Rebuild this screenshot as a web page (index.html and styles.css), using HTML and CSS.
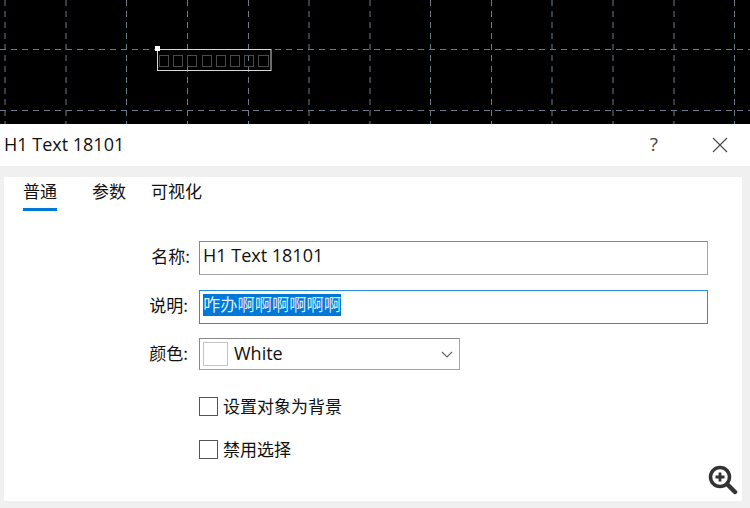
FILE: index.html
```html
<!DOCTYPE html>
<html>
	<head>
		<meta charset="utf-8">
		<title>H1 Text 18101</title>
		<link rel="stylesheet" href="styles.css">
	</head>
	<body>
		<div class="chart">
			<svg class="chart-svg" width="750" height="124" viewBox="0 0 750 124">
				<g class="grid-line">
					<path d="M5 0V124M66 0V124M126.5 0V124M187.5 0V124M248.5 0V124M309 0V124M370 0V124M430.5 0V124M491.5 0V124M552 0V124M613 0V124M674 0V124M734.5 0V124"/>
					<path d="M0 49.5H750M0 110.5H750"/>
				</g>
				<rect class="text-box" x="157.5" y="49.5" width="113.5" height="21"/>
				<g class="tofu">
					<rect x="159.5" y="55.5" width="9" height="11"/>
					<rect x="173.5" y="55.5" width="9" height="11"/>
					<rect x="187.5" y="55.5" width="9" height="11"/>
					<rect x="202.5" y="55.5" width="9" height="11"/>
					<rect x="216.5" y="55.5" width="9" height="11"/>
					<rect x="230.5" y="55.5" width="9" height="11"/>
					<rect x="244.5" y="55.5" width="9" height="11"/>
					<rect x="258.5" y="55.5" width="10" height="11"/>
				</g>
				<rect class="anchor" x="155" y="46" width="5" height="5"/>
			</svg>
		</div>

		<div class="dialog">
			<div class="title-bar">
				<span class="title-text">H1 Text 18101</span>
				<span class="title-help">?</span>
				<svg class="title-close" width="16" height="16" viewBox="0 0 16 16">
					<path d="M1 1L15 15M15 1L1 15"/>
				</svg>
			</div>

			<div class="panel">
				<div class="tabs">
					<div class="tab tab-active">普通</div>
					<div class="tab">参数</div>
					<div class="tab">可视化</div>
				</div>

				<div class="form">
					<div class="form-row">
						<label class="form-label form-label-name">名称:</label>
						<div class="field">H1 Text 18101</div>
					</div>
					<div class="form-row">
						<label class="form-label">说明:</label>
						<div class="field field-focus"><span class="selected">咋办啊啊啊啊啊啊</span></div>
					</div>
					<div class="form-row form-row-color">
						<label class="form-label">颜色:</label>
						<div class="color-select">
							<span class="color-swatch"></span>
							<span class="color-name">White</span>
							<svg class="color-arrow" width="12" height="7" viewBox="0 0 12 7">
								<path d="M1 1L6 6L11 1"/>
							</svg>
						</div>
					</div>
					<div class="check-row check-row-first">
						<span class="check-box"></span>
						<span class="check-text">设置对象为背景</span>
					</div>
					<div class="check-row">
						<span class="check-box"></span>
						<span class="check-text">禁用选择</span>
					</div>
				</div>

				<svg class="zoom-icon" width="30" height="30" viewBox="0 0 30 30">
					<circle class="zoom-ring" cx="12" cy="12" r="9.5"/>
					<path class="zoom-handle" d="M19.5 19.5L27 27"/>
					<path class="zoom-plus" d="M12 7.5V16.5M7.5 12H16.5"/>
				</svg>
			</div>
		</div>
	</body>
</html>
```

FILE: styles.css
```css
html, body {
	margin: 0;
	padding: 0;
}

body {
	width: 750px;
	height: 508px;
	overflow: hidden;
	background: #f0f0f0;
	font-family: "Open Sans", "Noto Sans CJK SC", sans-serif;
	color: #111;
}

.chart {
	height: 124px;
	background: #000;
}

.chart-svg {
	display: block;
}

.grid-line path {
	fill: none;
	stroke: #6b7b8c;
	stroke-width: 1;
	stroke-dasharray: 6 5;
}

.text-box {
	fill: none;
	stroke: #d8d8d8;
	stroke-width: 1;
}

.tofu rect {
	fill: none;
	stroke: #4a4a4a;
	stroke-width: 1;
}

.anchor {
	fill: #fff;
}

.dialog {
	height: 384px;
	display: flex;
	flex-direction: column;
}

.title-bar {
	height: 42px;
	flex: none;
	box-sizing: border-box;
	background: #fff;
	display: flex;
	align-items: center;
	padding: 0 22px 0 4px;
	font-size: 18px;
	line-height: 40px;
}

.title-text {
	flex: 1;
	height: 40px;
	margin-bottom: 2px;
}

.title-help {
	margin-right: 54px;
	color: #444;
	font-size: 19px;
	height: 40px;
	margin-bottom: 2px;
}

.title-close path {
	fill: none;
	stroke: #444;
	stroke-width: 1.1;
}

.panel {
	position: relative;
	flex: none;
	height: 324px;
	margin: 11px 8px 0 4px;
	background: #fff;
}

.tabs {
	display: flex;
	padding-left: 19px;
	height: 34px;
	font-size: 17px;
	font-family: "Noto Sans CJK SC", sans-serif;
}

.tab {
	margin-right: 35px;
	line-height: 28px;
	height: 34px;
	box-sizing: border-box;
}

.tab + .tab + .tab {
	margin-left: -10px;
}

.tab-active {
	border-bottom: 3px solid #0078d7;
}

.form {
	padding-top: 30px;
	font-family: "Noto Sans CJK SC", sans-serif;
	font-size: 17px;
}

.form-row {
	display: flex;
	align-items: center;
	height: 34px;
	margin-bottom: 15px;
}

.form-row-color {
	height: 32px;
	margin-top: -1px;
}

.form-label {
	width: 184px;
	text-align: right;
	margin-right: 11px;
	line-height: 28px;
	height: 32px;
}

.form-row-color .form-label {
	line-height: 30px;
}

.form-label-name {
	width: 186px;
	margin-right: 9px;
}

.field {
	width: 509px;
	height: 34px;
	box-sizing: border-box;
	border: 1px solid #888;
	border-right-color: #a4a4a4;
	border-bottom-color: #a4a4a4;
	padding-left: 3px;
	font-family: "Open Sans", "Noto Sans CJK SC", sans-serif;
	font-size: 18px;
	line-height: 26px;
}

.field-focus {
	border-color: #2e8ce0;
}

.selected {
	display: inline-block;
	height: 22px;
	line-height: 20px;
	margin-top: 3px;
	vertical-align: top;
	background: #0078d7;
	color: #dbeaf7;
	font-family: "Noto Sans CJK SC", sans-serif;
	font-size: 17.25px;
}

.color-select {
	width: 261px;
	height: 32px;
	box-sizing: border-box;
	border: 1px solid #888;
	border-right-color: #a4a4a4;
	border-bottom-color: #a4a4a4;
	display: flex;
	align-items: center;
	padding-left: 3px;
	font-family: "Open Sans", sans-serif;
	font-size: 18px;
	line-height: 28px;
}

.color-swatch {
	width: 23px;
	height: 22px;
	border: 1px solid #c4c4c4;
	background: #fff;
}

.color-name {
	flex: 1;
	margin-left: 6px;
	height: 28px;
	margin-bottom: 2px;
}

.color-arrow {
	margin-right: 6px;
}

.color-arrow path {
	fill: none;
	stroke: #666;
	stroke-width: 1.2;
}

.check-row {
	display: flex;
	align-items: center;
	height: 19px;
	margin-left: 195px;
	margin-bottom: 24px;
	font-size: 17px;
}

.check-row-first {
	margin-top: 27px;
}

.check-box {
	width: 19px;
	height: 19px;
	box-sizing: border-box;
	border: 1px solid #555;
	margin-right: 5px;
}

.check-text {
	line-height: 19px;
	height: 19px;
	margin-bottom: 3px;
}

/* lies over the panel corner */
.zoom-icon {
	position: absolute;
	left: 704px;
	top: 288px;
}

.zoom-ring {
	fill: none;
	stroke: #333;
	stroke-width: 3.5;
}

.zoom-handle {
	fill: none;
	stroke: #333;
	stroke-width: 4.5;
	stroke-linecap: round;
}

.zoom-plus {
	fill: none;
	stroke: #333;
	stroke-width: 2.8;
}
```
